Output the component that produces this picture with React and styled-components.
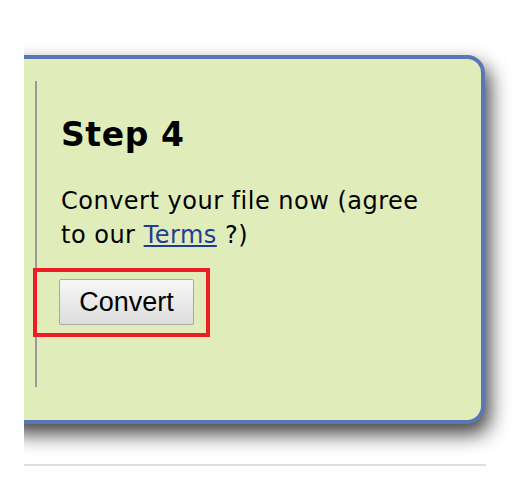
import React from 'react';
import styled, { createGlobalStyle } from 'styled-components';

const GlobalStyle = createGlobalStyle`
  html, body {
    margin: 0;
    padding: 0;
    background: #ffffff;
  }
  body {
    font-family: "DejaVu Sans", Verdana, sans-serif;
  }
`;

const App = () => {
  return (
    <>
      <GlobalStyle />
      <Stage>
        <StepPanel>
          <StepBody>
            <StepTitle>Step 4</StepTitle>
            <StepText>
              Convert your file now (agree to our <TermsLink href="#">Terms</TermsLink> ?)
            </StepText>
            <ButtonRow>
              <Highlight />
              <ConvertButton type="button">Convert</ConvertButton>
            </ButtonRow>
          </StepBody>
        </StepPanel>
        <Divider />
      </Stage>
    </>
  );
};

export default App;

// === styles ===
const Stage = styled.div`
  margin-left: 24px;
  width: 495px;
  padding-top: 55px;
  padding-bottom: 14px;
  overflow: hidden;
`;

const StepPanel = styled.div`
  box-sizing: border-box;
  width: 485px;
  margin-left: -24px;
  padding: 22px 0 33px 31px;
  background: #e0edbb;
  border: 4px solid #5877b4;
  border-radius: 18px;
  box-shadow: 5px 10px 20px rgba(0, 0, 0, 0.75);
`;

const StepBody = styled.div`
  box-sizing: border-box;
  height: 306px;
  padding-left: 24px;
  border-left: 2px solid #9a9a9a;
`;

const StepTitle = styled.h2`
  margin: 0;
  padding-top: 35px;
  font-size: 33px;
  line-height: 38px;
  font-weight: 700;
  letter-spacing: 0.6px;
  color: #000;
`;

const StepText = styled.p`
  width: 372px;
  margin: 30px 0 0;
  font-size: 24px;
  line-height: 34px;
  letter-spacing: 0.5px;
  color: #000;
`;

const TermsLink = styled.a`
  color: #1f3c98;
  text-decoration: underline;
`;

const ButtonRow = styled.div`
  position: relative;
  margin-top: 27px;
`;

const Highlight = styled.span`
  position: absolute;
  left: -28px;
  top: -11px;
  width: 177px;
  height: 69px;
  box-sizing: border-box;
  border: 4px solid #ee1c25;
  pointer-events: none;
`;

const ConvertButton = styled.button`
  position: relative;
  box-sizing: border-box;
  height: 46px;
  width: 135px;
  margin-left: -2px;
  padding: 0;
  font-family: "Liberation Sans", Arial, sans-serif;
  font-size: 27px;
  color: #000;
  background: linear-gradient(#f7f7f7, #dcdcdc);
  border: 1px solid #a8a8a8;
  border-radius: 2px;
`;

const Divider = styled.div`
  width: 462px;
  height: 2px;
  margin-top: 40px;
  background: #dedede;
`;
